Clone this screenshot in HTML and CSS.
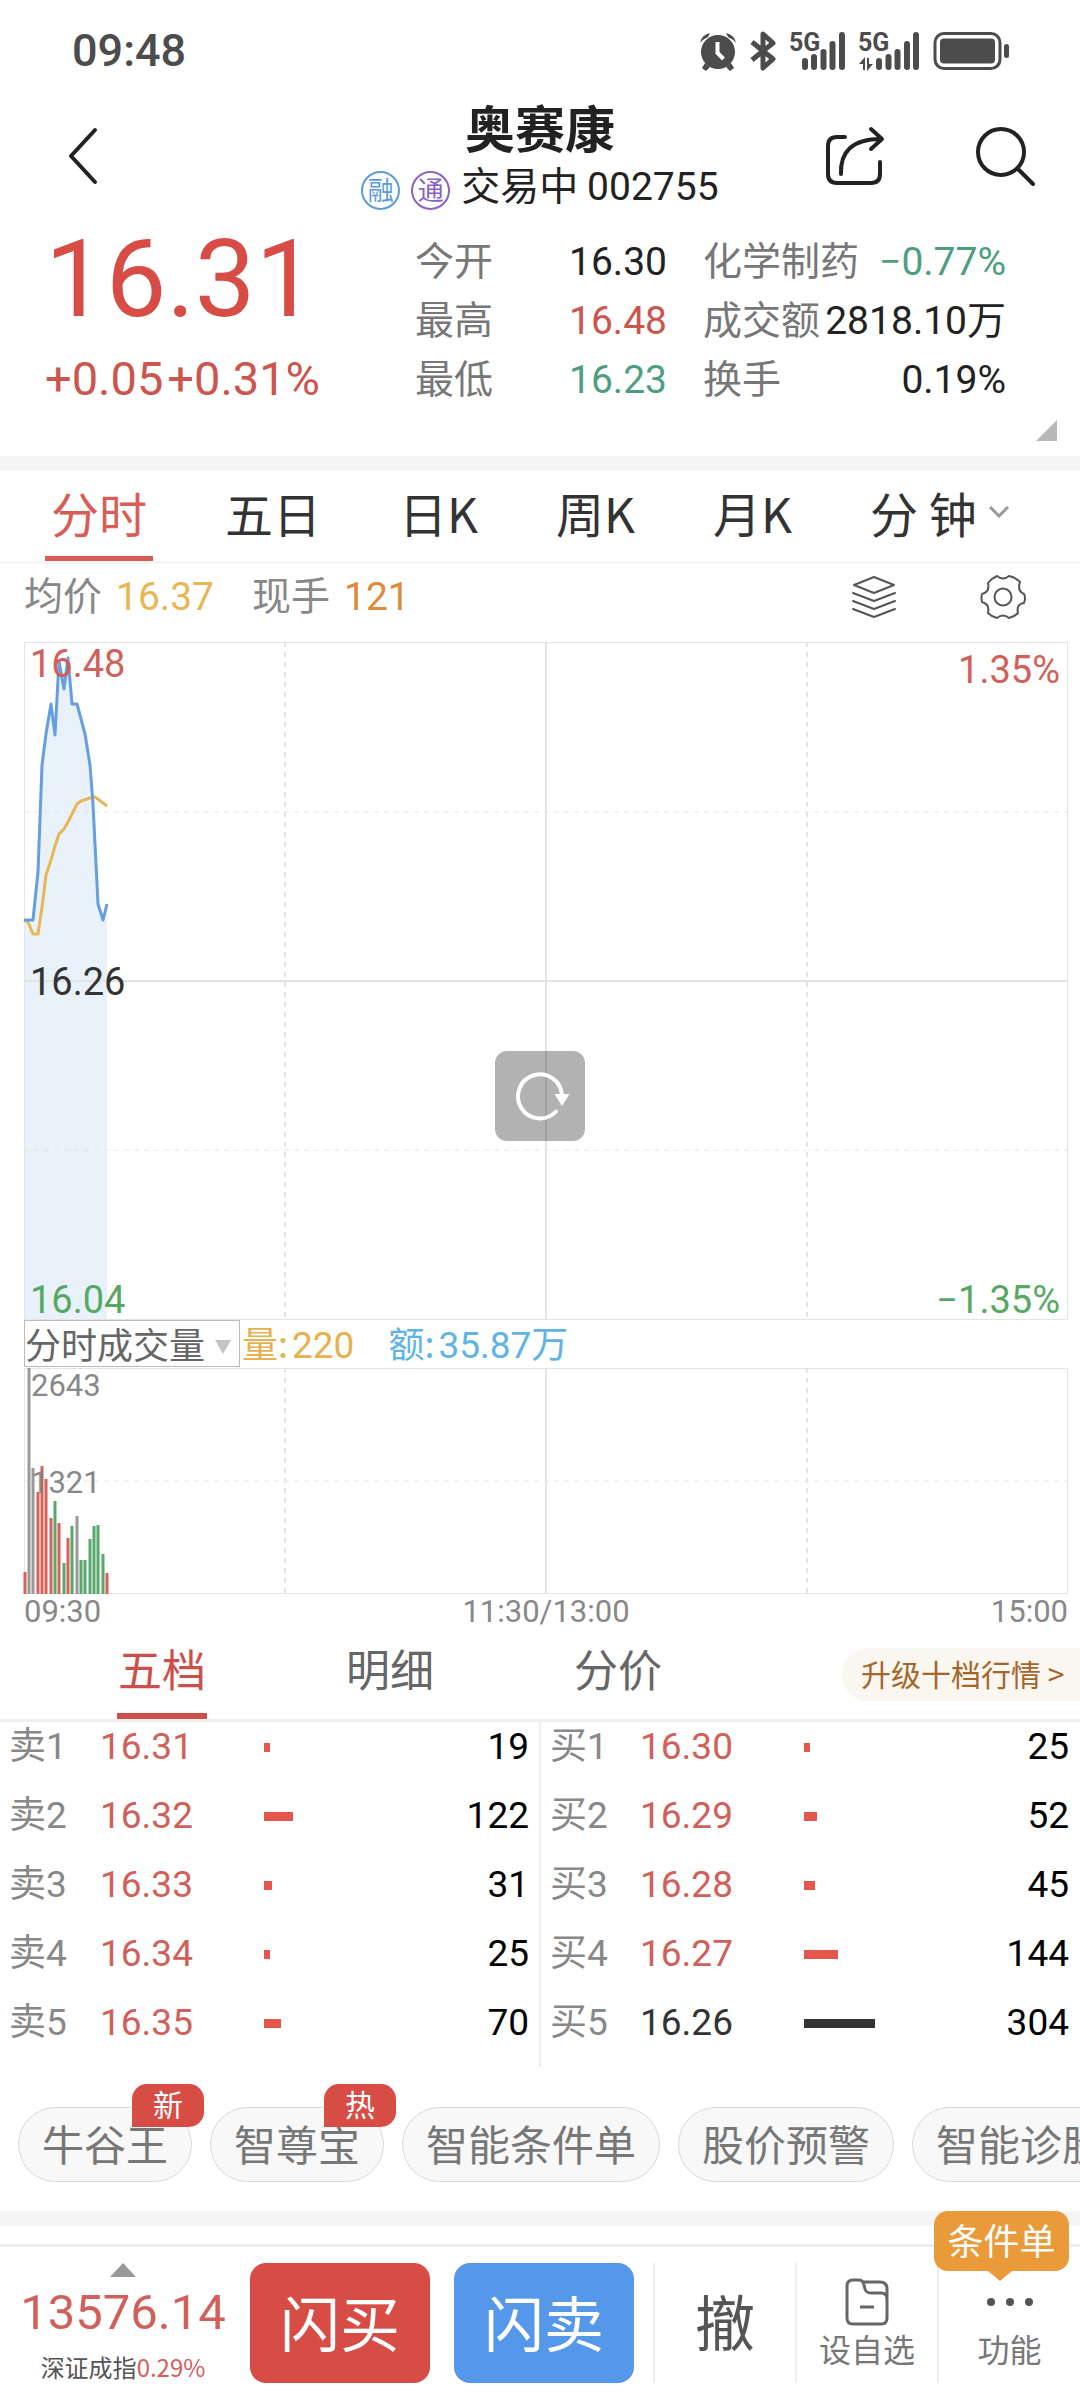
FILE: index.html
```html
<!DOCTYPE html>
<html lang="zh-CN">
<head>
<meta charset="utf-8">
<meta name="viewport" content="width=device-width">
<title>奥赛康 002755</title>
<link rel="stylesheet" href="styles.css">
</head>
<body>
<div class="status">
  <span class="status-time">09:48</span>
  <div class="status-icons">
    <svg class="i-alarm" width="38" height="40" viewBox="0 0 38 40"><circle cx="19" cy="21" r="17"/><path d="M1 12A12 12 0 0 1 11 2L9 6A22 22 0 0 0 1 12ZM37 12A12 12 0 0 0 27 2l2 4a22 22 0 0 1 8 6ZM6 32l5 4-4 4-4-3ZM32 32l-5 4 4 4 4-3Z"/><path class="cut" d="M18.500 11v11l6 6"/></svg>
    <svg class="i-bt" width="26" height="40" viewBox="0 0 26 40"><path d="M2 11l21 17-10 9V3l10 9L2 29"/></svg>
    <svg class="i-signal" width="56" height="40" viewBox="0 0 56 40"><text x="0" y="20">5G</text><path d="M16 30v6M25 26v10M34.500 21v15M43.500 13v23M53 4v32"/></svg>
    <svg class="i-signal" width="62" height="40" viewBox="0 0 62 40"><text x="0" y="20">5G</text><path d="M21 30v6M30.500 26v10M39.500 21v15M49 13v23M58 4v32"/><path class="arrows" d="M1 33l6-7v13H5v-6ZM15 33l-6 7V27h2v6Z"/></svg>
    <svg class="i-battery" width="76" height="40" viewBox="0 0 76 40"><rect class="shell" x="2" y="2.500" width="65" height="35" rx="9"/><rect x="7" y="7.500" width="55" height="25" rx="4"/><rect x="71" y="13" width="5" height="14" rx="2.500"/></svg>
  </div>
</div>

<header class="header">
  <button class="icon-btn back" aria-label="返回"><svg width="32" height="58" viewBox="0 0 32 58"><path d="M28 3L4 29l24 26"/></svg></button>
  <div class="heading">
    <h1 class="title">奥赛康</h1>
    <p class="subtitle"><span class="mark mark-blue">融</span><span class="mark mark-purple">通</span><span>交易中 <span class="num">002755</span></span></p>
  </div>
  <div class="header-actions">
    <button class="icon-btn" aria-label="分享"><svg width="60" height="60" viewBox="0 0 60 60"><path d="M20 11H12Q3 11 3 20v28q0 9 9 9h34q9 0 9-9V36"/><path d="M16 48C15 26 27 13 56 13M46 3l11 10-11 10"/></svg></button>
    <button class="icon-btn" aria-label="搜索"><svg width="60" height="60" viewBox="0 0 60 60"><circle cx="26" cy="26" r="23"/><path d="M43 43l15 15"/></svg></button>
  </div>
</header>

<section class="quote">
  <div class="quote-main">
    <div class="price">16.31</div>
    <div class="change"><span>+0.05</span><span>+0.31%</span></div>
  </div>
  <dl class="stats stats-a">
    <div><dt>今开</dt><dd>16.30</dd></div>
    <div><dt>最高</dt><dd class="up">16.48</dd></div>
    <div><dt>最低</dt><dd class="down">16.23</dd></div>
  </dl>
  <dl class="stats stats-b">
    <div><dt>化学制药</dt><dd class="down">−0.77%</dd></div>
    <div><dt>成交额</dt><dd>2818.10万</dd></div>
    <div><dt>换手</dt><dd>0.19%</dd></div>
  </dl>
  <span class="corner"></span>
</section>

<nav class="period">
  <button class="period-tab active">分时</button>
  <button class="period-tab">五日</button>
  <button class="period-tab">日K</button>
  <button class="period-tab">周K</button>
  <button class="period-tab">月K</button>
  <button class="period-tab">分 钟<svg width="20" height="12" viewBox="0 0 20 12"><path d="M1 1l9 9 9-9"/></svg></button>
</nav>

<div class="info">
  <span>均价</span><span class="num info-avg">16.37</span><span class="info-next">现手</span><span class="num info-lot">121</span>
  <button class="tool" aria-label="指标"><svg width="44" height="44" viewBox="0 0 44 44"><path d="M22 2L42 10 22 18 2 10ZM1 18l21 8 21-8M1 26l21 8 21-8M1 34l21 8 21-8"/></svg></button>
  <button class="tool tool-last" aria-label="设置"><svg width="46" height="46" viewBox="0 0 46 46"><circle cx="23" cy="23" r="8.500"/><path d="M17 2Q23 7 29 2Q35 3 40 8Q37 17 44 20Q46 24 44 29Q36 30 38 39Q34 43 29 44Q23 39 17 44Q12 43 8 39Q10 30 2 28Q1 23 2 20Q10 18 8 9Q12 4 17 2Z"/></svg></button>
</div>

<main class="charts">
  <div class="trend">
    <svg class="plot" viewBox="0 0 1044 678">
      <path class="fill" d="M0 278H9L14 230 18 123 22 92 27 62 31 93 35 19 40 47 44 16 48 62H53L61 92 66 123 69 162 74 262 79 278 83 262V678H0Z"/>
      <path class="grid-dash thick" d="M261 0V678M783 0V678"/>
      <path class="grid-dash" d="M0 170H1044M0 508H1044"/>
      <path class="grid thick" d="M522 0V678M0 339H1044"/>
      <rect class="grid" x="0.500" y="0.500" width="1043" height="677"/>
      <path class="avg-line" d="M0 278L4 280 9 292H14L18 265 22 233 27 218 31 204 35 192 40 187 44 180 48 172 53 162 57 159 66 156 71 155 83 164"/>
      <path class="price-line" d="M0 278H9L14 230 18 123 22 92 27 62 31 93 35 19 40 47 44 16 48 62H53L61 92 66 123 69 162 74 262 79 278 83 262"/>
    </svg>
    <div class="scale scale-left"><span class="up-soft">16.48</span><span>16.26</span><span class="green">16.04</span></div>
    <div class="scale scale-right"><span class="up-soft">1.35%</span><span class="green">−1.35%</span></div>
    <button class="refresh" aria-label="刷新"><svg width="90" height="90" viewBox="0 0 90 90"><path class="ring" d="M61 60.500A22 22 0 1 1 67 45"/><path class="tip" d="M59.500 43h15L67 55Z"/></svg></button>
  </div>
  <div class="volume-head">
    <div class="select-box">
      <select class="select" aria-label="副图指标"><option>分时成交量</option></select>
      <svg class="select-arrow" width="16" height="14" viewBox="0 0 16 14"><path d="M0 0h16L8 14Z"/></svg>
    </div>
    <span class="vol">量:<span class="num">220</span></span><span class="amount">额:<span class="num">35.87万</span></span>
  </div>
  <div class="volume">
    <svg class="plot" viewBox="0 0 1044 226">
      <path class="grid-dash thick" d="M261 0V226M783 0V226"/>
      <path class="grid-dash" d="M0 113H1044"/>
      <path class="grid thick" d="M522 0V226"/>
      <rect class="grid" x="0.500" y="0.500" width="1043" height="225"/>
      <path class="bar-flat" d="M5 226V0M9 226V100M53 226V148"/>
      <path class="bar-up" d="M1 226V204M14 226V124M18 226V98M22 226V111M27 226V150M35 226V155M44 226V170M83 226V205"/>
      <path class="bar-down" d="M31 226V133M40 226V195M48 226V158M57 226V192M61 226V192M66 226V171M70 226V158M74 226V157M79 226V186"/>
    </svg>
    <div class="volume-scale"><span>2643</span><span>1321</span></div>
  </div>
  <div class="times"><span>09:30</span><span>11:30/13:00</span><span>15:00</span></div>
</main>

<nav class="depth-nav">
  <button class="depth-tab active">五档</button>
  <button class="depth-tab">明细</button>
  <button class="depth-tab">分价</button>
  <a class="upgrade" href="#">升级十档行情 &gt;</a>
</nav>

<section class="depth">
  <table class="book">
    <tr><th>卖1</th><td class="book-price">16.31</td><td><span class="bar" style="width:6px"></span></td><td class="qty">19</td></tr>
    <tr><th>卖2</th><td class="book-price">16.32</td><td><span class="bar" style="width:29px"></span></td><td class="qty">122</td></tr>
    <tr><th>卖3</th><td class="book-price">16.33</td><td><span class="bar" style="width:8px"></span></td><td class="qty">31</td></tr>
    <tr><th>卖4</th><td class="book-price">16.34</td><td><span class="bar" style="width:6px"></span></td><td class="qty">25</td></tr>
    <tr><th>卖5</th><td class="book-price">16.35</td><td><span class="bar" style="width:17px"></span></td><td class="qty">70</td></tr>
  </table>
  <table class="book">
    <tr><th>买1</th><td class="book-price">16.30</td><td><span class="bar" style="width:6px"></span></td><td class="qty">25</td></tr>
    <tr><th>买2</th><td class="book-price">16.29</td><td><span class="bar" style="width:13px"></span></td><td class="qty">52</td></tr>
    <tr><th>买3</th><td class="book-price">16.28</td><td><span class="bar" style="width:11px"></span></td><td class="qty">45</td></tr>
    <tr><th>买4</th><td class="book-price">16.27</td><td><span class="bar" style="width:34px"></span></td><td class="qty">144</td></tr>
    <tr class="level"><th>买5</th><td class="book-price">16.26</td><td><span class="bar" style="width:71px"></span></td><td class="qty">304</td></tr>
  </table>
</section>

<div class="chips">
  <button class="chip">牛谷王<span class="badge">新</span></button>
  <button class="chip">智尊宝<span class="badge">热</span></button>
  <button class="chip">智能条件单</button>
  <button class="chip">股价预警</button>
  <button class="chip">智能诊股</button>
</div>

<footer class="bottom">
  <button class="index">
    <svg width="26" height="14" viewBox="0 0 26 14"><path d="M13 0L26 14H0Z"/></svg>
    <span class="index-value">13576.14</span>
    <span class="index-name">深证成指<span class="index-change">0.29%</span></span>
  </button>
  <button class="trade buy">闪买</button>
  <button class="trade sell">闪卖</button>
  <div class="menu">
    <button class="menu-item cancel">撤</button>
    <button class="menu-item"><svg width="44" height="48" viewBox="0 0 44 48"><path d="M2 8Q2 2 8 2h6q4 0 5 5l1 4q1 4 6 4h10q6 0 6 6v19q0 6-6 6H8q-6 0-6-6ZM17 4h18q7 0 7 7v8M15 29h14"/></svg><span>设自选</span></button>
    <button class="menu-item"><svg class="dots" width="48" height="48" viewBox="0 0 48 48"><circle cx="5" cy="24" r="4"/><circle cx="24" cy="24" r="4"/><circle cx="43" cy="24" r="4"/></svg><span>功能</span><span class="bubble">条件单</span></button>
  </div>
</footer>
</body>
</html>
```
FILE: styles.css
```css
* { box-sizing: border-box; }

body {
  margin: 0;
  background: #fff;
  color: #222;
  font-family: "Noto Sans CJK SC", "Noto Sans", sans-serif;
  font-size: 39px;
  overflow-x: hidden;
}

h1, p, dl, dd { margin: 0; }
button {
  margin: 0;
  padding: 0;
  border: 0;
  background: none;
  color: inherit;
  font: inherit;
  white-space: nowrap;
}
svg { display: block; }

/* figures */
.num, .status-time, .price, .change, .stats dd, .scale, .volume-scale, .times, .book, .index-value {
  font-family: Roboto, "Noto Sans CJK SC", sans-serif;
}
.num { line-height: 1; }

/* status bar */
.status {
  display: flex;
  justify-content: space-between;
  align-items: center;
  height: 96px;
  padding: 6px 71px 0 72px;
  color: #4c4c4c;
}
.status-time { font-size: 45px; font-weight: 500; line-height: 60px; }
.status-icons { display: flex; gap: 13px; fill: #4c4c4c; }
.status-icons svg { overflow: visible; }
.i-alarm .cut { fill: none; stroke: #fff; stroke-width: 4; }
.i-bt { fill: none; stroke: #4c4c4c; stroke-width: 5; stroke-linejoin: round; }
.i-signal text { font-family: "Liberation Sans Narrow", "Roboto", sans-serif; font-weight: 700; font-size: 25px; }
.i-signal path { stroke: #4c4c4c; stroke-width: 6; stroke-linecap: round; }
.i-signal .arrows { stroke: none; }
.i-battery .shell { fill: none; stroke: #4c4c4c; stroke-width: 3; }

/* header */
.header {
  display: grid;
  grid-template-columns: 1fr auto 1fr;
  padding: 0 45px 19px;
}
.header svg { fill: none; stroke: #222; stroke-width: 4; stroke-linecap: round; stroke-linejoin: round; }
.icon-btn { justify-self: start; align-self: center; padding-top: 6px; }
.back { margin-left: 22px; }
.heading { text-align: center; }
.title { font-size: 50px; font-weight: 700; line-height: 60px; }
.subtitle { display: flex; align-items: flex-end; gap: 11px; line-height: 54px; }
.mark {
  width: 39px;
  height: 39px;
  border: 2px solid;
  border-radius: 50%;
  font-size: 26px;
  line-height: 32px;
}
.mark-blue { color: #5b9bdc; }
.mark-purple { color: #8a62c4; }
.header-actions { display: flex; justify-content: flex-end; gap: 90px; }

/* quote */
.quote { position: relative; display: flex; gap: 36px; padding: 0 74px 50px 45px; border-bottom: 15px solid #f5f5f5; }
.quote-main { flex: 1; display: flex; flex-direction: column; justify-content: space-between; color: #d84c46; }
.price { font-size: 108px; line-height: 100px; }
.change { display: flex; gap: 4px; font-size: 47px; line-height: 54px; color: #cc554e; }
.stats { line-height: 59px; }
.stats > div { display: flex; justify-content: space-between; align-items: baseline; height: 59px; }
.stats dt { color: #777; }
.stats dd { line-height: 40px; }
.stats-a { width: 252px; }
.stats-b { width: 303px; }
.stats .up { color: #cc554e; }
.stats .down { color: #4d9e80; }
.corner { position: absolute; right: 23px; bottom: 15px; border: solid transparent; border-width: 21px 0 0 21px; border-bottom: 21px solid #b8b8b8; border-top: 0; }

/* period tabs */
.period { display: flex; gap: 66px; padding-left: 45px; border-bottom: 3px solid #f5f5f5; }
.period-tab {
  display: flex;
  align-items: center;
  gap: 12px;
  height: 90px;
  padding: 11px 6px 14px;
  border-bottom: 5px solid transparent;
  font-size: 48px;
  line-height: 60px;
  color: #333;
}
.period-tab.active { color: #d85d56; border-color: #d85d56; }
.period-tab svg { fill: none; stroke: #999; stroke-width: 3; }

.info { display: flex; align-items: baseline; gap: 14px; height: 78px; padding: 0 54px 20px 24px; line-height: 58px; color: #888; }
.info-avg { color: #e8b755; }
.info-lot { color: #dc8b3c; }
.info-next { margin-left: 24px; }
.tool { align-self: center; margin-left: auto; padding-top: 8px; }
.tool-last { margin-left: 70px; }
.tool svg { fill: none; stroke: #555; stroke-width: 2; stroke-linejoin: round; stroke-linecap: round; }

/* charts */
.charts { padding: 0 12px 0 24px; }
.trend, .volume { position: relative; }
.plot { width: 100%; height: auto; overflow: visible; fill: none; }
.grid { stroke: #e4e4e4; }
.grid-dash { stroke: #e4e4e4; stroke-dasharray: 5 5; }
.thick { stroke-width: 2; }
.fill { fill: #e9f2fb; }
.price-line { stroke: #669fdf; stroke-width: 3; stroke-linejoin: round; }
.avg-line { stroke: #e6b657; stroke-width: 3; stroke-linejoin: round; }
.scale {
  position: absolute;
  top: 0;
  bottom: 0;
  display: flex;
  flex-direction: column;
  justify-content: space-between;
  padding-top: 2px;
  font-size: 38px;
  line-height: 40px;
}
.scale-left { left: 6px; color: #333; }
.scale-right { right: 8px; padding-top: 8px; text-align: right; }
.up-soft { color: #d2605a; }
.green { color: #57a862; }
.refresh { position: absolute; left: 50%; top: 409px; margin-left: -51px; border-radius: 12px; background: rgba(0, 0, 0, 0.3); }
.ring { fill: none; stroke: #fff; stroke-width: 4; stroke-linecap: round; }
.tip { fill: #fff; }

.volume-head { display: flex; height: 48px; font-size: 36px; line-height: 44px; }
.volume-head .num { margin-left: 4px; font-size: 37px; }
.select-box { position: relative; width: 216px; height: 47px; border: 1px solid #bbb; }
.select {
  display: block;
  width: 100%;
  height: 43px;
  padding: 0;
  border: 0;
  appearance: none;
  background: none;
  color: #666;
  font: inherit;
}
.select-arrow { position: absolute; right: 8px; top: 19px; fill: #c4c4c4; pointer-events: none; }
.vol { margin-left: 2px; color: #e8b14f; }
.amount { margin-left: 34px; color: #5fb4e5; }

.bar-flat, .bar-up, .bar-down { stroke-width: 3; }
.bar-flat { stroke: #999; }
.bar-up { stroke: #d8625b; }
.bar-down { stroke: #57a86a; }
.volume-scale { position: absolute; left: 7px; top: 0; display: grid; gap: 61px; font-size: 31px; line-height: 36px; color: #888; }
.times { display: flex; justify-content: space-between; padding-top: 2px; font-size: 31px; line-height: 32px; color: #888; }

/* order book */
.depth-nav { display: flex; align-items: flex-start; gap: 138px; padding-left: 117px; border-bottom: 3px solid #eee; }
.depth-tab { padding: 10px 1px 15px; border-bottom: 6px solid transparent; font-size: 44px; line-height: 60px; color: #666; }
.depth-tab.active { color: #cc4f49; border-color: #cc4f49; }
.upgrade {
  min-width: 238px;
  margin: 20px 0 0 auto;
  padding: 0 0 3px 19px;
  border-radius: 27px 0 0 27px;
  background: #faf6f0;
  color: #a4662b;
  font-size: 30px;
  line-height: 50px;
  text-decoration: none;
  white-space: nowrap;
}
.depth { display: flex; }
.book { flex: 1; table-layout: fixed; border-collapse: collapse; font-size: 37px; line-height: 50px; }
.book + .book { border-left: 2px solid #eee; }
.book th { width: 93px; padding: 0 0 19px 9px; text-align: left; font-weight: 400; color: #888; }
.book td { padding: 0 0 19px 9px; }
.book .book-price { width: 162px; padding-left: 7px; color: #d2605a; }
.book .qty { width: 140px; padding: 0 10px 19px 0; text-align: right; color: #000; }
.bar { display: block; height: 9px; background: #e5574c; }
.level .bar { background: #333; }
.book .level .book-price { color: #333; }

.chips { display: flex; gap: 18px; padding: 40px 0 29px 18px; overflow: hidden; border-bottom: 15px solid #f5f5f5; }
.chip {
  position: relative;
  flex: none;
  height: 75px;
  padding: 0 23px 3px;
  border: 1px solid #d8d8d8;
  border-radius: 38px;
  background: #f8f8f8;
  color: #777;
  font-size: 42px;
  line-height: 70px;
}
.badge {
  position: absolute;
  right: -13px;
  top: -24px;
  width: 72px;
  height: 43px;
  border-radius: 15px 15px 15px 0;
  background: #d84c46;
  color: #fff;
  font-size: 30px;
  line-height: 39px;
}

/* bottom bar */
.bottom { display: flex; align-items: flex-start; margin-top: 18px; padding: 16px 0 17px; border-top: 3px solid #eee; }
.index { display: flex; flex-direction: column; align-items: center; flex: 1; padding-right: 4px; }
.index svg { fill: #999; }
.index-value { margin-top: 8px; font-size: 49px; line-height: 56px; color: #d2605a; }
.index-name { margin-top: 8px; font-size: 24px; line-height: 36px; color: #555; }
.index-change { color: #d2605a; }
.trade { width: 180px; height: 120px; margin-right: 24px; padding-bottom: 6px; border-radius: 16px; color: #fff; font-size: 60px; }
.buy { background: #d84c46; }
.sell { background: #5597e9; margin-right: 19px; }
.menu { display: flex; }
.menu-item {
  position: relative;
  display: flex;
  flex-direction: column;
  align-items: center;
  width: 142px;
  height: 120px;
  padding-top: 15px;
  border-left: 2px solid #eee;
  color: #777;
  font-size: 32px;
  line-height: 44px;
}
.menu-item:last-child { width: 143px; }
.menu-item svg { fill: none; stroke: #666; stroke-width: 3; }
.menu-item .dots { fill: #555; stroke: none; }
.menu .cancel { padding: 0; color: #555; font-size: 60px; line-height: 114px; }
.bubble {
  position: absolute;
  left: -5px;
  top: -52px;
  width: 135px;
  height: 60px;
  border-radius: 14px;
  background: #ea9a39;
  color: #fff;
  font-size: 36px;
  line-height: 56px;
}
.bubble::after {
  content: "";
  position: absolute;
  left: 54px;
  top: 60px;
  border: solid transparent;
  border-width: 10px 12px 0;
  border-top-color: #ea9a39;
}
```
